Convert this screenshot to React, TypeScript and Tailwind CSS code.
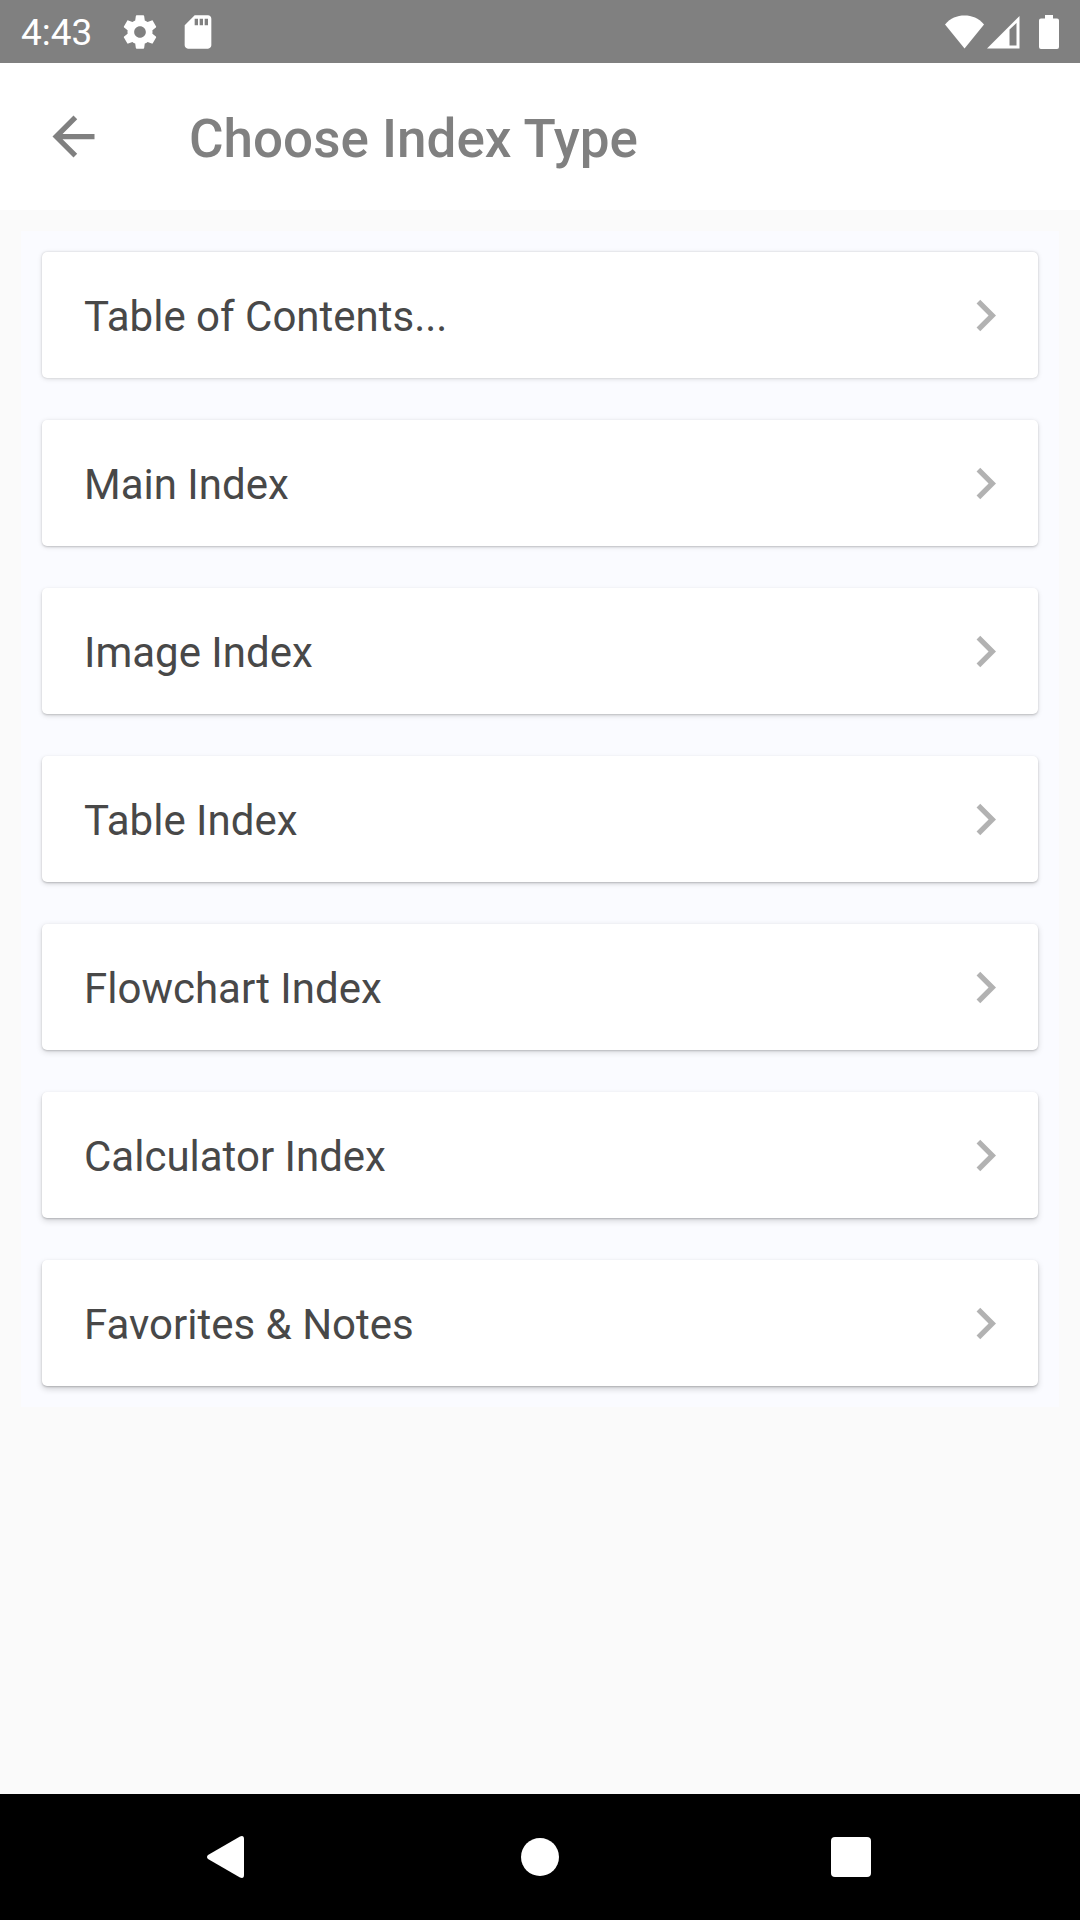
import React from "react";

type Entry = { label: string; shadow: string };

const entries: Entry[] = [
  { label: "Table of Contents...", shadow: "shadow-[0_1px_5px_rgba(0,0,0,0.13),0_0_2px_rgba(0,0,0,0.16)]" },
  { label: "Main Index", shadow: "shadow-[0_1px_5px_rgba(0,0,0,0.13),0_1px_2px_rgba(0,0,0,0.16)]" },
  { label: "Image Index", shadow: "shadow-[0_2px_5px_rgba(0,0,0,0.13),0_1px_2px_rgba(0,0,0,0.16)]" },
  { label: "Table Index", shadow: "shadow-[0_2px_5px_rgba(0,0,0,0.14),0_1px_2px_rgba(0,0,0,0.18)]" },
  { label: "Flowchart Index", shadow: "shadow-[0_2px_6px_rgba(0,0,0,0.15),0_1px_2px_rgba(0,0,0,0.18)]" },
  { label: "Calculator Index", shadow: "shadow-[0_3px_6px_rgba(0,0,0,0.15),0_1px_2px_rgba(0,0,0,0.20)]" },
  { label: "Favorites & Notes", shadow: "shadow-[0_3px_6px_rgba(0,0,0,0.17),0_1px_2px_rgba(0,0,0,0.20)]" },
];

function StatusBar() {
  return (
    <div className="flex h-[63px] shrink-0 items-center justify-between bg-[#808080] px-[21px] text-white">
      <div className="flex items-center">
        <span className="pt-0.5 text-[37px] leading-[44px]">4:43</span>
        <svg className="ml-7 size-10" viewBox="0 0 24 24" fill="currentColor" aria-hidden="true">
          <path d="M19.43 12.98c.04-.32.07-.64.07-.98s-.03-.66-.07-.98l2.11-1.65c.19-.15.24-.42.12-.64l-2-3.46c-.12-.22-.39-.3-.61-.22l-2.49 1c-.52-.4-1.08-.73-1.69-.98l-.38-2.65C14.46 2.18 14.25 2 14 2h-4c-.25 0-.46.18-.49.42l-.38 2.65c-.61.25-1.17.59-1.69.98l-2.49-1c-.23-.09-.49 0-.61.22l-2 3.46c-.13.22-.07.49.12.64l2.11 1.65c-.04.32-.07.65-.07.98s.03.66.07.98l-2.11 1.65c-.19.15-.24.42-.12.64l2 3.46c.12.22.39.3.61.22l2.49-1c.52.4 1.08.73 1.69.98l.38 2.65c.03.24.24.42.49.42h4c.25 0 .46-.18.49-.42l.38-2.65c.61-.25 1.17-.59 1.69-.98l2.49 1c.23.09.49 0 .61-.22l2-3.46c.12-.22.07-.49-.12-.64l-2.11-1.65zM12 15.5c-1.93 0-3.5-1.57-3.5-3.5s1.57-3.5 3.5-3.5 3.5 1.57 3.5 3.5-1.57 3.5-3.5 3.5z" />
        </svg>
        <svg className="ml-[18px] size-10" viewBox="0 0 24 24" fill="currentColor" aria-hidden="true">
          <path d="M18 2h-8L4.02 8 4 20c0 1.1.9 2 2 2h12c1.1 0 2-.9 2-2V4c0-1.1-.9-2-2-2zm-6 6h-2V4h2v4zm3 0h-2V4h2v4zm3 0h-2V4h2v4z" />
        </svg>
      </div>
      <div className="flex items-center">
        <svg className="h-[34px] w-[39px]" viewBox="0 0 39 34" fill="currentColor" aria-hidden="true">
          <path d="M0 9.500C5.500 3 12 .5 19.500 .5S33.500 3 39 9.500L19.500 33.500Z" />
        </svg>
        <svg className="ml-[3px] h-[34px] w-[33px]" viewBox="0 0 33 34" fill="currentColor" aria-hidden="true">
          <path fillRule="evenodd" d="M0 33.500 32.500 1V33.500ZM22.500 14.500V30.500H29.500V8Z" />
        </svg>
        <svg className="ml-[19px] h-[34px] w-5" viewBox="0 0 20 34" fill="currentColor" aria-hidden="true">
          <path d="M6 0H14V3.500H18Q20 3.500 20 5.500V32Q20 34 18 34H2Q0 34 0 32V5.500Q0 3.500 2 3.500H6Z" />
        </svg>
      </div>
    </div>
  );
}

function Header() {
  return (
    <header className="flex h-[147px] shrink-0 items-center bg-white px-[42px] text-[#808080]">
      <button type="button" aria-label="Back" className="shrink-0">
        <svg className="size-[63px]" viewBox="0 0 24 24" fill="currentColor" aria-hidden="true">
          <path d="M20 11H7.830l5.590-5.590L12 4l-8 8 8 8 1.410-1.410L7.830 13H20v-2z" />
        </svg>
      </button>
      <h1 className="ml-[84px] pt-1 text-[53px] leading-[64px] font-medium">Choose Index Type</h1>
    </header>
  );
}

function IndexCard({ label, shadow }: Entry) {
  return (
    <li>
      <button
        type="button"
        className={`flex h-[126px] w-full items-center justify-between rounded-[5px] bg-white pr-[21px] pl-[42px] text-left ${shadow}`}
      >
        <span className="pt-1 text-[42px] leading-[50px] text-[#484848]">{label}</span>
        <svg className="size-[63px] shrink-0 text-[#b2b2b2]" viewBox="0 0 24 24" fill="currentColor" aria-hidden="true">
          <path d="M10 6 8.590 7.410 13.170 12l-4.580 4.590L10 18l6-6z" />
        </svg>
      </button>
    </li>
  );
}

function NavigationBar() {
  const button = "flex size-[126px] items-center justify-center";
  return (
    <nav className="flex h-[126px] shrink-0 items-center justify-between bg-black px-[166px] text-white">
      <button type="button" aria-label="Back" className={button}>
        <svg className="h-[42px] w-11" viewBox="0 0 44 42" fill="currentColor" aria-hidden="true">
          <path d="M1 19 33 .5Q37 -1 37 3V39Q37 43 33 41.500L1 23Q-1 21 1 19Z" />
        </svg>
      </button>
      <button type="button" aria-label="Home" className={button}>
        <span className="size-[38px] rounded-full bg-white" />
      </button>
      <button type="button" aria-label="Recent apps" className={button}>
        <span className="size-10 rounded-[4px] bg-white" />
      </button>
    </nav>
  );
}

export default function App() {
  return (
    <div className="flex min-h-screen flex-col bg-[#fafafa] font-[Roboto,sans-serif]">
      <StatusBar />
      <Header />
      <main className="flex-1 p-[21px]">
        <ul className="flex flex-col gap-[42px] bg-[#fafbff] p-[21px]">
          {entries.map((entry) => (
            <IndexCard key={entry.label} {...entry} />
          ))}
        </ul>
      </main>
      <NavigationBar />
    </div>
  );
}
